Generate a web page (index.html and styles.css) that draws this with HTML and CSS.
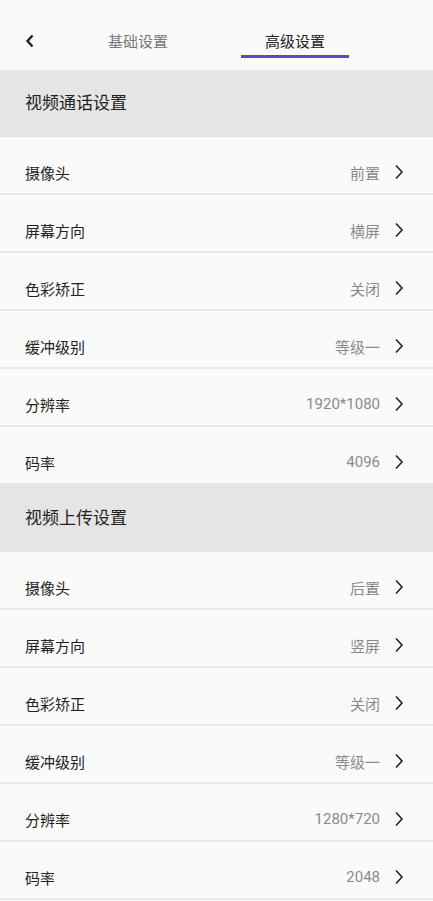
FILE: index.html
```html
<!DOCTYPE html>
<html lang="zh">
<head>
  <meta charset="UTF-8">
  <title>高级设置</title>
  <link rel="stylesheet" href="styles.css">
</head>
<body>
  <!-- Top bar with tabs -->
  <div class="topbar">
    <span class="back">
      <svg width="10" height="14" viewBox="0 0 10 14"><path d="M7.5 1.5 L2.5 7 L7.5 12.5" fill="none" stroke="#222" stroke-width="2.4"/></svg>
    </span>
    <div class="tab">基础设置</div>
    <div class="tab active">高级设置</div>
  </div>

  <div class="section-title">视频通话设置</div>
  <div class="list">
    <div class="row"><span class="label">摄像头</span><span class="value">前置</span><svg class="arrow" width="10" height="16" viewBox="0 0 10 16"><path d="M2 1.5 L8 8 L2 14.5" fill="none" stroke="#222" stroke-width="1.6"/></svg></div>
    <div class="row"><span class="label">屏幕方向</span><span class="value">横屏</span><svg class="arrow" width="10" height="16" viewBox="0 0 10 16"><path d="M2 1.5 L8 8 L2 14.5" fill="none" stroke="#222" stroke-width="1.6"/></svg></div>
    <div class="row"><span class="label">色彩矫正</span><span class="value">关闭</span><svg class="arrow" width="10" height="16" viewBox="0 0 10 16"><path d="M2 1.5 L8 8 L2 14.5" fill="none" stroke="#222" stroke-width="1.6"/></svg></div>
    <div class="row"><span class="label">缓冲级别</span><span class="value">等级一</span><svg class="arrow" width="10" height="16" viewBox="0 0 10 16"><path d="M2 1.5 L8 8 L2 14.5" fill="none" stroke="#222" stroke-width="1.6"/></svg></div>
    <div class="row"><span class="label">分辨率</span><span class="value">1920*1080</span><svg class="arrow" width="10" height="16" viewBox="0 0 10 16"><path d="M2 1.5 L8 8 L2 14.5" fill="none" stroke="#222" stroke-width="1.6"/></svg></div>
    <div class="row"><span class="label">码率</span><span class="value">4096</span><svg class="arrow" width="10" height="16" viewBox="0 0 10 16"><path d="M2 1.5 L8 8 L2 14.5" fill="none" stroke="#222" stroke-width="1.6"/></svg></div>
  </div>

  <div class="section-title">视频上传设置</div>
  <div class="list">
    <div class="row"><span class="label">摄像头</span><span class="value">后置</span><svg class="arrow" width="10" height="16" viewBox="0 0 10 16"><path d="M2 1.5 L8 8 L2 14.5" fill="none" stroke="#222" stroke-width="1.6"/></svg></div>
    <div class="row"><span class="label">屏幕方向</span><span class="value">竖屏</span><svg class="arrow" width="10" height="16" viewBox="0 0 10 16"><path d="M2 1.5 L8 8 L2 14.5" fill="none" stroke="#222" stroke-width="1.6"/></svg></div>
    <div class="row"><span class="label">色彩矫正</span><span class="value">关闭</span><svg class="arrow" width="10" height="16" viewBox="0 0 10 16"><path d="M2 1.5 L8 8 L2 14.5" fill="none" stroke="#222" stroke-width="1.6"/></svg></div>
    <div class="row"><span class="label">缓冲级别</span><span class="value">等级一</span><svg class="arrow" width="10" height="16" viewBox="0 0 10 16"><path d="M2 1.5 L8 8 L2 14.5" fill="none" stroke="#222" stroke-width="1.6"/></svg></div>
    <div class="row"><span class="label">分辨率</span><span class="value">1280*720</span><svg class="arrow" width="10" height="16" viewBox="0 0 10 16"><path d="M2 1.5 L8 8 L2 14.5" fill="none" stroke="#222" stroke-width="1.6"/></svg></div>
    <div class="row"><span class="label">码率</span><span class="value">2048</span><svg class="arrow" width="10" height="16" viewBox="0 0 10 16"><path d="M2 1.5 L8 8 L2 14.5" fill="none" stroke="#222" stroke-width="1.6"/></svg></div>
  </div>
</body>
</html>
```

FILE: styles.css
```css
body {
  margin: 0;
  background-color: #fafafa;
  font-family: Roboto, "Noto Sans CJK SC", sans-serif;
  color: #222;
}
.topbar {
  height: 70px;
  display: flex;
  align-items: flex-start;
  padding-top: 30px;
  box-sizing: border-box;
}
.back {
  width: 25px;
  padding-left: 25px;
  padding-top: 4px;
  display: flex;
}
.tab {
  width: 108px;
  height: 28px;
  box-sizing: border-box;
  text-align: center;
  font-size: 15px;
  line-height: 24px;
  color: #777;
}
.tab:first-of-type {
  margin-left: 34px;
}
.tab.active {
  margin-left: 49px;
  color: #222;
  border-bottom: 3px solid #5b48c6;
}
.section-title {
  height: 67px;
  background-color: #e5e5e5;
  padding-left: 25px;
  font-size: 17px;
  line-height: 67px;
  color: #222;
}
.row {
  height: 56px;
  box-sizing: content-box;
  display: flex;
  align-items: center;
  padding: 14px 29px 0 25px;
  height: 42px;
  border-bottom: 2px solid #e8e8e8;
  font-size: 15px;
}
.label {
  flex: 1;
  color: #222;
}
.value {
  color: #8a8a8a;
}
.arrow {
  margin-left: 14px;
}
```
